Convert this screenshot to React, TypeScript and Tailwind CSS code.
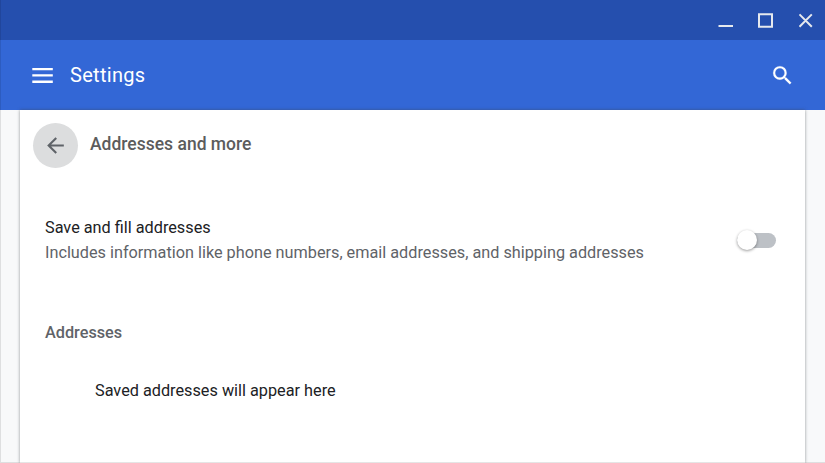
export default function App() {
  return (
    <div className="relative flex h-[463px] w-[825px] flex-col overflow-hidden bg-[#f8f9fa] font-['Roboto',sans-serif] text-[#202124]">
      <div className="flex h-10 shrink-0 items-center justify-end bg-[#254fae] pr-3">
        <svg className="h-4 w-[95px]" viewBox="0 0 95 16" fill="none" stroke="#e6e9ee" strokeWidth="2">
          <path d="M.5 14.1h14.5M41 2.3h13v12.4H41zM81.5 2.4l12.3 12.3M93.8 2.4L81.5 14.7" />
        </svg>
      </div>
      <header className="flex h-[70px] shrink-0 items-center bg-[#3367d6] pl-8 pr-[30px] text-white">
        <svg className="h-4 w-[21px]" viewBox="0 0 21 16" fill="currentColor">
          <path d="M.3.9h20.5v2.4H.3zM.3 7.2h20.5v2.4H.3zM.3 13.5h20.5v2.4H.3z" />
        </svg>
        <h1 className="ml-[17px] text-[20px] tracking-[0.3px]">Settings</h1>
        <svg className="ml-auto size-[25px]" viewBox="0 0 24 24" fill="currentColor" stroke="currentColor" strokeWidth=".15">
          <path d="M15.5 14h-.79l-.28-.27A6.47 6.47 0 0 0 16 9.5 6.5 6.5 0 1 0 9.5 16c1.61 0 3.09-.59 4.23-1.57l.27.28v.79l5 4.99L20.49 19l-4.99-5zm-6 0C7.01 14 5 11.99 5 9.5S7.01 5 9.5 5 14 7.01 14 9.5 11.99 14 9.5 14z" />
        </svg>
      </header>
      <main className="mx-5 flex-1 bg-white shadow-[0_0_3px_rgba(60,64,67,0.55)]">
        <div className="flex h-[70px] items-center pl-[13px]">
          <button className="flex size-[45px] items-center justify-center rounded-full bg-[#dcddde] text-[#5f6368]">
            <svg className="size-[25px]" viewBox="0 0 24 24" fill="currentColor">
              <path d="M20 11H7.83l5.59-5.59L12 4l-8 8 8 8 1.41-1.41L7.83 13H20v-2z" />
            </svg>
          </button>
          <h2 className="mb-0.5 ml-3 text-[17.5px] font-medium text-[#5c5c5c]">Addresses and more</h2>
        </div>
        <div className="mt-[35px] flex items-center justify-between pl-[25px] pr-[29px]">
          <div className="text-[16.25px] leading-[25px]">
            <p>Save and fill addresses</p>
            <p className="text-[#5f6368]">Includes information like phone numbers, email addresses, and shipping addresses</p>
          </div>
          <span className="flex h-[15px] w-[39px] items-center rounded-full bg-[#bdc1c6]">
            <span className="size-5 rounded-full bg-white shadow-[0_1px_3px_rgba(0,0,0,0.4)]" />
          </span>
        </div>
        <h3 className="mt-[55px] pl-[25px] text-[16.25px] leading-[25px] font-medium text-[#5f6368]">Addresses</h3>
        <p className="mt-[33px] pl-[75px] text-[16.25px] leading-[25px]">Saved addresses will appear here</p>
      </main>
      <div className="pointer-events-none absolute inset-0 border-b border-l border-black/10" />
    </div>
  )
}
